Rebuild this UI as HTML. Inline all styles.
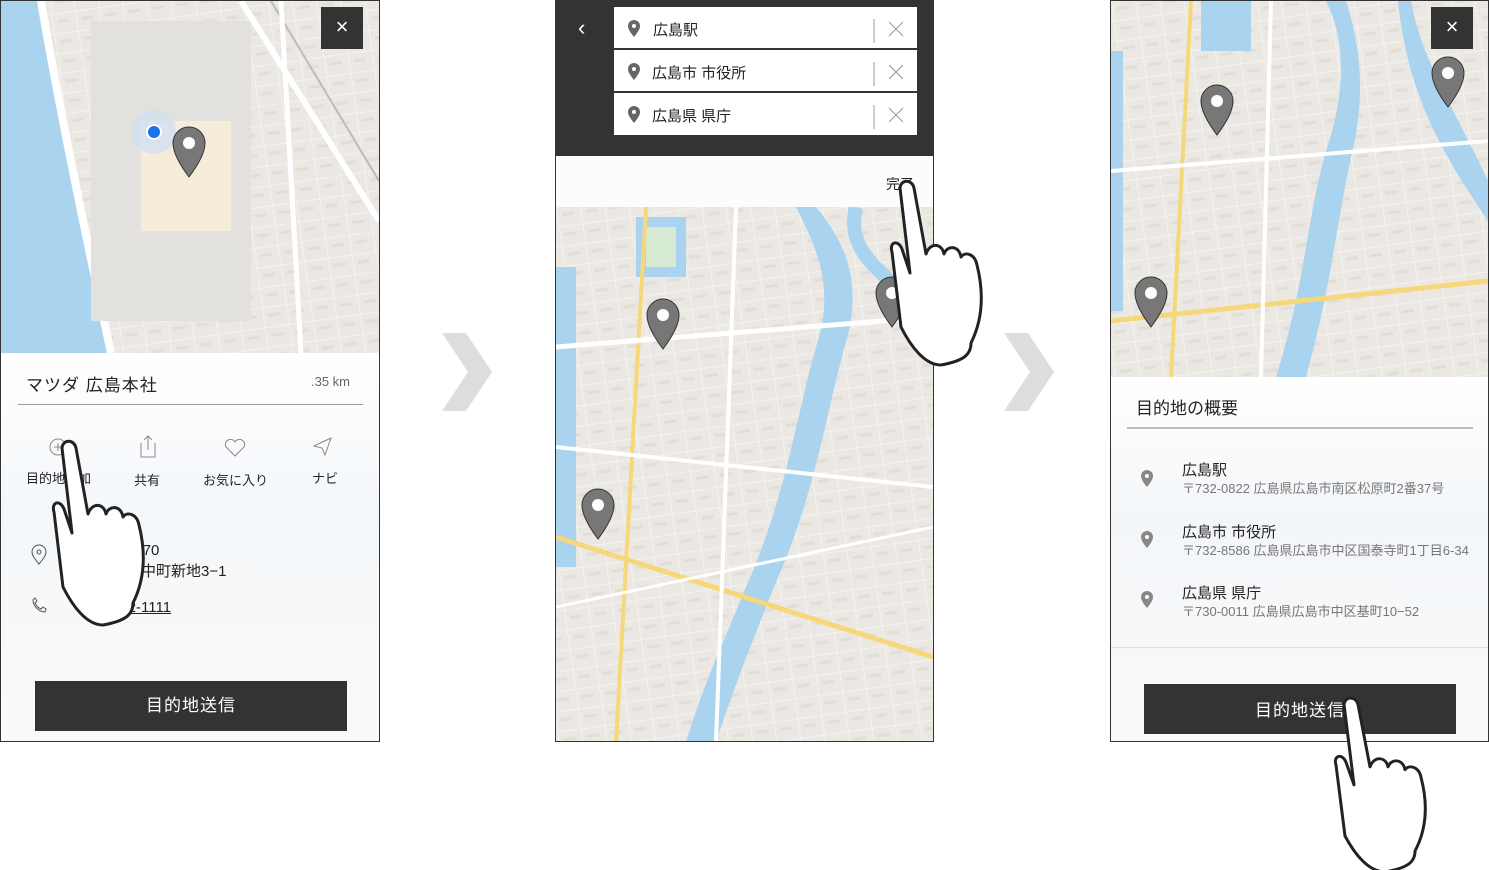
<!DOCTYPE html>
<html><head><meta charset="utf-8"><style>
*{margin:0;padding:0;box-sizing:border-box}
body{width:1489px;height:870px;background:#fff;position:relative;overflow:hidden;font-family:"Liberation Sans","Noto Sans CJK JP",sans-serif;color:#222}
.p{position:absolute;border:1px solid #333;overflow:hidden;background:#fcfcfc}
.map{position:absolute;background:#eceae6;overflow:hidden}
.a{position:absolute}
svg.a{overflow:visible}
.btn{position:absolute;background:#333;color:#fff;font-size:17px;text-align:center;letter-spacing:1px}
.x{position:absolute;background:#333;width:42px;height:42px;color:#fff;font-size:22px;text-align:center;line-height:40px}
</style></head><body>
<svg width="0" height="0" style="position:absolute"><defs>
<pattern id="grid" width="24" height="20" patternUnits="userSpaceOnUse" patternTransform="rotate(-8)"><rect width="24" height="20" fill="#ebe8e3"/><path d="M0 0h24M0 0v20" stroke="#f7f6f3" stroke-width="1.5"/><rect x="5" y="7" width="12" height="3" fill="#d8d4cc" opacity=".5"/></pattern>
</defs></svg>

<!-- LEFT PANEL -->
<div class="p" style="left:0;top:0;width:380px;height:742px">
 <div class="map" style="left:0;top:0;width:378px;height:352px">
  <svg width="378" height="352" class="a" style="left:0;top:0">
   <rect width="378" height="352" fill="url(#grid)"/>
   <path d="M0 0 L40 0 Q60 120 110 352 L0 352Z" fill="#aad3f0"/>
   <path d="M40 0 Q60 120 110 352" stroke="#fff" stroke-width="8" fill="none"/>
   <rect x="90" y="20" width="160" height="300" fill="#e3e1dd"/>
   <rect x="140" y="120" width="90" height="110" fill="#f5ecd9"/>
   <path d="M240 0 L378 220" stroke="#fff" stroke-width="6"/>
   <path d="M270 0 L378 180" stroke="#bbb" stroke-width="2"/>
   <path d="M280 0 L300 352" stroke="#fff" stroke-width="5"/>
   <circle cx="153" cy="131" r="22" fill="#cfe0f5" opacity=".7"/>
   <circle cx="153" cy="131" r="7" fill="#1a73e8" stroke="#fff" stroke-width="2"/>
   <path d="M188 176 C176 160 172 150 172 142 A16 16 0 0 1 204 142 C204 150 200 160 188 176Z" fill="#777" stroke="#333"/>
   <circle cx="188" cy="142" r="6" fill="#fff"/>
  </svg>
  <div class="x" style="left:320px;top:6px">×</div>
 </div>
 <div class="a" style="left:0;top:352px;width:378px;height:390px;background:linear-gradient(#fff,#f4f7fa 40%,#fafafa)"></div>
 <div class="a" style="left:25px;top:370px;font-size:17px;letter-spacing:1px">マツダ 広島本社</div>
 <div class="a" style="left:310px;top:373px;font-size:13px;color:#666">.35 km</div>
 <div class="a" style="left:17px;top:403px;width:345px;height:1px;background:#999"></div>
 <svg class="a" style="left:0;top:430px" width="378" height="40">
  <circle cx="57" cy="16" r="8" fill="none" stroke="#888"/><path d="M53 16h8M57 12v8" stroke="#888"/>
  <path d="M140 12v14h14V12M147 5v14M143 9l4-4 4 4" fill="none" stroke="#888"/>
  <path d="M234 25l-9-9a5 5 0 0 1 9-5a5 5 0 0 1 9 5z" fill="none" stroke="#888"/>
  <path d="M313 15l17-8-6 17-3-7z" fill="none" stroke="#888"/>
 </svg>
 <div class="a" style="left:25px;top:467px;font-size:13px">目的地追加</div>
 <div class="a" style="left:133px;top:469px;font-size:13px">共有</div>
 <div class="a" style="left:202px;top:469px;font-size:13px">お気に入り</div>
 <div class="a" style="left:311px;top:467px;font-size:13px">ナビ</div>
 <svg class="a" style="left:28px;top:543px" width="20" height="80"><path d="M10 20c-5-6-7-9-7-12a7 7 0 0 1 14 0c0 3-2 6-7 12z" fill="none" stroke="#555"/><circle cx="10" cy="8" r="2" fill="none" stroke="#555"/><path d="M4 56c0 6 6 12 12 12l1-3-3-2-2 2c-3-1-5-4-6-6l2-2-2-3z" fill="none" stroke="#555"/></svg>
 <div class="a" style="left:80px;top:539px;font-size:15px;line-height:21px">〒730-8670<br>安芸郡府中町新地3−1</div>
 <div class="a" style="left:80px;top:598px;font-size:15px;text-decoration:underline">082-282-1111</div>
 <div class="btn" style="left:34px;top:680px;width:312px;height:50px;line-height:50px">目的地送信</div>
</div>

<!-- hand 1 -->
<svg class="a" style="left:50px;top:438px" width="100" height="185" viewBox="0 0 100 185"><path d="M12 10c1-9 12-9 14 0l12 66c4-12 16-11 18 0 3-9 15-9 17 3 4-6 14-3 16 8 7 28 6 54-6 78 0 12-8 18-30 22-16 0-30-18-40-38L4 74c-3-10 6-13 10-3l8 24z" fill="#fff" stroke="#222" stroke-width="3" stroke-linejoin="round"/></svg>

<!-- arrows -->
<svg class="a" style="left:442px;top:333px" width="50" height="78"><path d="M0 0h24l26 39-26 39H0l26-39z" fill="#ddd"/></svg>
<svg class="a" style="left:1004px;top:333px" width="50" height="78"><path d="M0 0h24l26 39-26 39H0l26-39z" fill="#ddd"/></svg>

<!-- MIDDLE PANEL -->
<div class="p" style="left:555px;top:0;width:379px;height:742px">
 <div class="a" style="left:0;top:0;width:377px;height:155px;background:#333"></div>
 <div class="a" style="left:22px;top:14px;color:#fff;font-size:22px">‹</div>
 <div class="a" style="left:58px;top:6px;width:303px;height:128px;background:#fff"></div>
 <div class="a" style="left:58px;top:47px;width:303px;height:2px;background:#333"></div>
 <div class="a" style="left:58px;top:90px;width:303px;height:2px;background:#333"></div>
 <svg class="a" style="left:70px;top:16px" width="300" height="110">
  <g fill="#666"><path d="M8 20c-4-5-6-8-6-11a6 6 0 0 1 12 0c0 3-2 6-6 11z"/><path d="M8 63c-4-5-6-8-6-11a6 6 0 0 1 12 0c0 3-2 6-6 11z"/><path d="M8 106c-4-5-6-8-6-11a6 6 0 0 1 12 0c0 3-2 6-6 11z"/></g>
  <g fill="#fff"><circle cx="8" cy="9" r="2"/><circle cx="8" cy="52" r="2"/><circle cx="8" cy="95" r="2"/></g>
  <g stroke="#999"><path d="M248 2v24M248 45v24M248 88v24"/><path d="M263 5l14 14M277 5l-14 14M263 48l14 14M277 48l-14 14M263 91l14 14M277 91l-14 14"/></g>
 </svg>
 <div class="a" style="left:97px;top:18px;font-size:15px">広島駅</div>
 <div class="a" style="left:96px;top:61px;font-size:15px">広島市 市役所</div>
 <div class="a" style="left:96px;top:104px;font-size:15px">広島県 県庁</div>
 <div class="a" style="left:330px;top:173px;font-size:14px">完了</div>
 <div class="map" style="left:0;top:206px;width:377px;height:535px">
  <svg width="377" height="535">
   <rect width="377" height="535" fill="url(#grid)"/>
   <path d="M0 60h20v300H0z" fill="#aad3f0"/>
   <path d="M80 10h50v60H80z" fill="#aad3f0"/><path d="M90 20h30v40H90z" fill="#d7ead3"/>
   <path d="M240 0c20 40 40 80 20 140-20 70-30 150-70 240-20 50-40 90-60 155h30c20-60 40-110 60-160 40-90 50-170 70-240 20-70-10-110-30-135z" fill="#aad3f0"/>
   <path d="M300 0c-10 40 20 60 40 80" stroke="#aad3f0" stroke-width="14" fill="none"/>
   <path d="M0 330l377 120" stroke="#f6d77a" stroke-width="5"/>
   <path d="M90 0L60 535" stroke="#f6d77a" stroke-width="4"/>
   <path d="M0 140l377 -30" stroke="#fff" stroke-width="5"/>
   <path d="M0 240l377 40" stroke="#fff" stroke-width="4"/>
   <path d="M180 0l-20 535" stroke="#fff" stroke-width="4"/>
   <path d="M0 400l377 -80" stroke="#fff" stroke-width="3"/>
   <g fill="#777" stroke="#333"><path d="M107 142c-12-16-16-26-16-34a16 16 0 0 1 32 0c0 8-4 18-16 34z"/><path d="M42 332c-12-16-16-26-16-34a16 16 0 0 1 32 0c0 8-4 18-16 34z"/><path d="M336 120c-12-16-16-26-16-34a16 16 0 0 1 32 0c0 8-4 18-16 34z"/></g>
   <g fill="#fff"><circle cx="107" cy="108" r="6"/><circle cx="42" cy="298" r="6"/><circle cx="336" cy="86" r="6"/></g>
  </svg>
 </div>
</div>
<svg class="a" style="left:888px;top:178px" width="100" height="185" viewBox="0 0 100 185"><path d="M12 10c1-9 12-9 14 0l12 66c4-12 16-11 18 0 3-9 15-9 17 3 4-6 14-3 16 8 7 28 6 54-6 78 0 12-8 18-30 22-16 0-30-18-40-38L4 74c-3-10 6-13 10-3l8 24z" fill="#fff" stroke="#222" stroke-width="3" stroke-linejoin="round"/></svg>

<!-- RIGHT PANEL -->
<div class="p" style="left:1110px;top:0;width:379px;height:742px">
 <div class="map" style="left:0;top:0;width:377px;height:376px">
  <svg width="377" height="376">
   <rect width="377" height="376" fill="url(#grid)"/>
   <path d="M0 50h12v260H0z" fill="#aad3f0"/>
   <path d="M90 0h50v50H90z" fill="#aad3f0"/>
   <path d="M215 0c20 40 20 90 0 150-20 70-20 130-50 226h30c25-90 30-150 45-220 15-60 10-110-5-156z" fill="#aad3f0"/>
   <path d="M300 0c10 60 50 120 77 180v40c-40-60-80-120-90-220z" fill="#aad3f0"/>
   <path d="M0 320l377 -40" stroke="#f6d77a" stroke-width="5"/>
   <path d="M80 0L60 376" stroke="#f6d77a" stroke-width="4"/>
   <path d="M0 170l377 -30" stroke="#fff" stroke-width="4"/>
   <path d="M160 0l-10 376" stroke="#fff" stroke-width="4"/>
   <g fill="#777" stroke="#333"><path d="M106 134c-12-16-16-26-16-34a16 16 0 0 1 32 0c0 8-4 18-16 34z"/><path d="M40 326c-12-16-16-26-16-34a16 16 0 0 1 32 0c0 8-4 18-16 34z"/><path d="M337 106c-12-16-16-26-16-34a16 16 0 0 1 32 0c0 8-4 18-16 34z"/></g>
   <g fill="#fff"><circle cx="106" cy="100" r="6"/><circle cx="40" cy="292" r="6"/><circle cx="337" cy="72" r="6"/></g>
  </svg>
  <div class="x" style="left:320px;top:6px">×</div>
 </div>
 <div class="a" style="left:0;top:376px;width:377px;height:366px;background:linear-gradient(#fff,#f3f6f9 40%,#fafafa)"></div>
 <div class="a" style="left:25px;top:393px;font-size:17px">目的地の概要</div>
 <div class="a" style="left:16px;top:426px;width:346px;height:2px;background:#bbb"></div>
 <svg class="a" style="left:28px;top:466px" width="16" height="150"><g fill="#888"><path d="M8 20c-4-5-6-8-6-11a6 6 0 0 1 12 0c0 3-2 6-6 11z"/><path d="M8 81c-4-5-6-8-6-11a6 6 0 0 1 12 0c0 3-2 6-6 11z"/><path d="M8 141c-4-5-6-8-6-11a6 6 0 0 1 12 0c0 3-2 6-6 11z"/></g><g fill="#fff"><circle cx="8" cy="9" r="2"/><circle cx="8" cy="70" r="2"/><circle cx="8" cy="130" r="2"/></g></svg>
 <div class="a" style="left:71px;top:461px;font-size:15px;line-height:18px">広島駅<br><span style="font-size:13px;color:#777">〒732-0822 広島県広島市南区松原町2番37号</span></div>
 <div class="a" style="left:71px;top:523px;font-size:15px;line-height:18px">広島市 市役所<br><span style="font-size:13px;color:#777">〒732-8586 広島県広島市中区国泰寺町1丁目6-34</span></div>
 <div class="a" style="left:71px;top:584px;font-size:15px;line-height:18px">広島県 県庁<br><span style="font-size:13px;color:#777">〒730-0011 広島県広島市中区基町10−52</span></div>
 <div class="a" style="left:0;top:646px;width:377px;height:1px;background:#ddd"></div>
 <div class="btn" style="left:33px;top:683px;width:312px;height:50px;line-height:54px">目的地送信</div>
</div>
<svg class="a" style="left:1332px;top:695px" width="100" height="175" viewBox="0 0 100 185" preserveAspectRatio="none"><path d="M12 10c1-9 12-9 14 0l12 66c4-12 16-11 18 0 3-9 15-9 17 3 4-6 14-3 16 8 7 28 6 54-6 78 0 12-8 18-30 22-16 0-30-18-40-38L4 74c-3-10 6-13 10-3l8 24z" fill="#fff" stroke="#222" stroke-width="3" stroke-linejoin="round"/></svg>
</body></html>
